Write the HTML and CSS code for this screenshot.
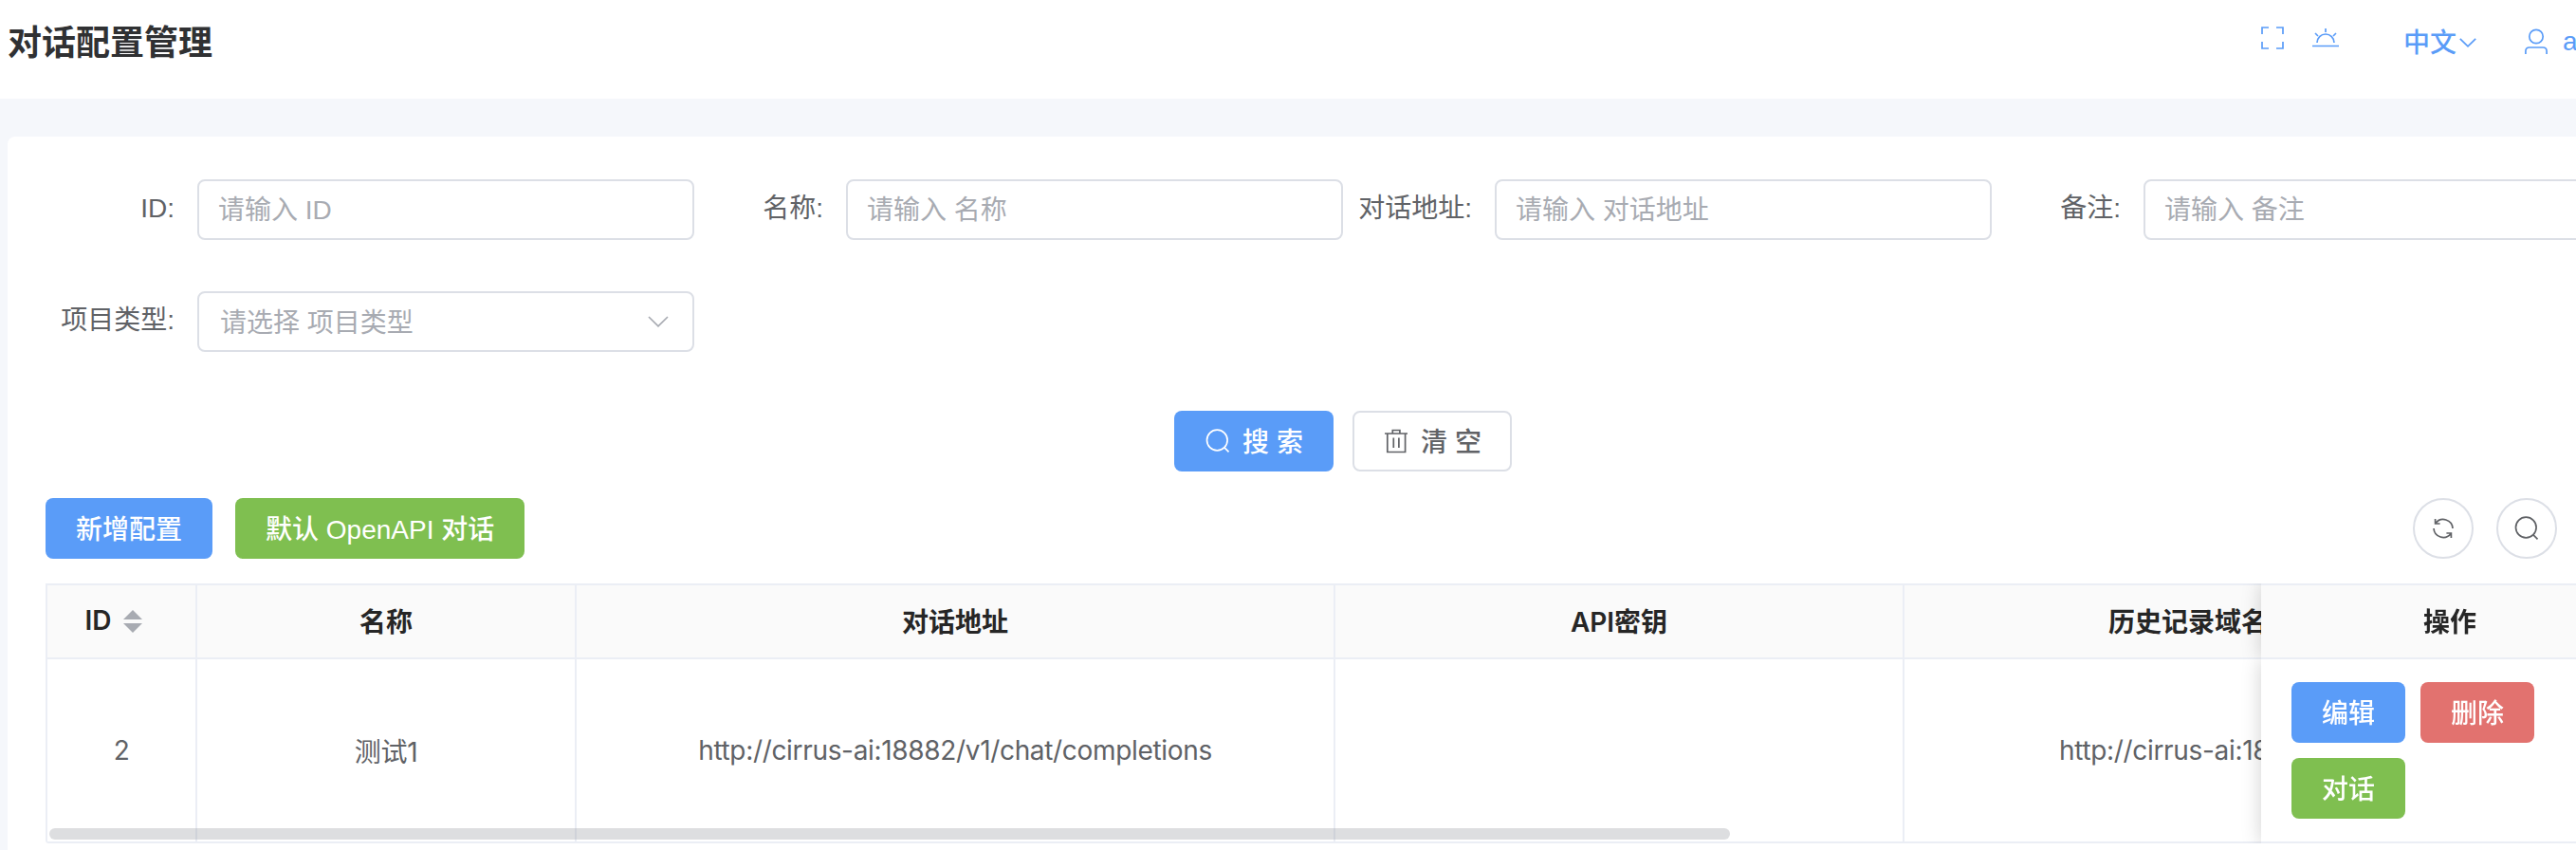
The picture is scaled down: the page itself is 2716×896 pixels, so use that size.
FILE: index.html
```html
<!DOCTYPE html>
<html lang="zh-CN">
<head>
    <meta charset="UTF-8">
    <meta name="viewport" content="width=device-width, initial-scale=1.0">
    <title>对话配置管理</title>
    <link rel="stylesheet" href="styles.css">
</head>
<body>
    <header class="header">
        <h1 class="title">对话配置管理</h1>
        <div class="tools">
            <svg class="icon full" viewBox="0 0 24 24"><path d="M1 8V1h7M16 1h7v7M23 16v7h-7M8 23H1v-7"/></svg>
            <svg class="icon sun" viewBox="0 0 28 22"><path d="M0 19.5h28M5 16a9 9 0 0 1 18 0M14 1v4M3 6l3 3M25 6l-3 3"/></svg>
            <div class="lang">
                <span>中文</span>
                <svg class="icon arrow" viewBox="0 0 18 10"><path d="M.8.8 9 8.8 17.2.8"/></svg>
            </div>
            <div class="user">
                <svg class="icon" viewBox="0 0 24 28"><circle cx="12" cy="8.5" r="7.2"/><path d="M.9 27v-3q0-4 4-4h14.200q4 0 4 4v3"/></svg>
                <span>a</span>
            </div>
        </div>
    </header>
    <div class="card">
        <form class="search-form">
            <div class="item">
                <label>ID:</label>
                <input type="text" placeholder="请输入 ID">
            </div>
            <div class="item">
                <label>名称:</label>
                <input type="text" placeholder="请输入 名称">
            </div>
            <div class="item">
                <label>对话地址:</label>
                <input type="text" placeholder="请输入 对话地址">
            </div>
            <div class="item">
                <label>备注:</label>
                <input type="text" placeholder="请输入 备注">
            </div>
            <div class="item">
                <label>项目类型:</label>
                <div class="select">
                    <span>请选择 项目类型</span>
                    <svg class="icon" viewBox="0 0 22 12"><path d="M1 1l10 9.800L21 1"/></svg>
                </div>
            </div>
        </form>
        <div class="form-btns">
            <button class="btn blue">
                <svg class="icon" viewBox="0 0 28 28"><circle cx="13.300" cy="13" r="10.800"/><path d="M20.800 20.600l4.700 4.700"/></svg>
                <span>搜 索</span>
            </button>
            <button class="btn plain">
                <svg class="icon" viewBox="0 0 28 28"><path d="M2 6h24M4.800 6v19.500h18.800V6M10.300 6V2.500h7.600V6M11.300 10.500v10.500M16.900 10.500v10.500"/></svg>
                <span>清 空</span>
            </button>
        </div>
        <div class="toolbar">
            <button class="btn blue"><span>新增配置</span></button>
            <button class="btn green"><span>默认 OpenAPI 对话</span></button>
            <div class="right">
                <button class="circle"><svg class="icon" viewBox="0 0 28 28"><path d="M5.600 4v5h5M6 8.600A10 10 0 0 1 24 14M22.400 24v-5h-5M22 19.400A10 10 0 0 1 4 14"/></svg></button>
                <button class="circle"><svg class="icon" viewBox="0 0 28 28"><circle cx="13.300" cy="13" r="10.800"/><path d="M20.800 20.600l4.700 4.700"/></svg></button>
            </div>
        </div>
        <div class="table-box">
            <table>
                <colgroup>
                    <col class="w160"><col class="w400"><col class="w800"><col class="w600"><col class="w600"><col class="rest"><col class="w400">
                </colgroup>
                <thead>
                    <tr>
                        <th><div class="sort"><span>ID</span><i class="caret"></i></div></th>
                        <th>名称</th>
                        <th>对话地址</th>
                        <th>API密钥</th>
                        <th>历史记录域名</th>
                        <th></th>
                        <th class="fixed">操作</th>
                    </tr>
                </thead>
                <tbody>
                    <tr>
                        <td>2</td>
                        <td>测试1</td>
                        <td>http://cirrus-ai:18882/v1/chat/completions</td>
                        <td></td>
                        <td>http://cirrus-ai:18882</td>
                        <td></td>
                        <td class="fixed">
                            <div class="actions">
                                <button class="btn blue"><span>编辑</span></button>
                                <button class="btn red"><span>删除</span></button>
                                <button class="btn green"><span>对话</span></button>
                            </div>
                        </td>
                    </tr>
                </tbody>
            </table>
            <div class="scrollbar"></div>
        </div>
    </div>
</body>
</html>
```

FILE: styles.css
```css
*{
    padding: 0;
    margin: 0;
    box-sizing: border-box;
}
body{
    background: #f5f7fb;
    font-family: 'Liberation Sans', 'Noto Sans CJK SC', sans-serif;
    font-size: 28px;
    color: #606266;
    height: 896px;
    overflow: hidden;
}
button, input{
    font: inherit;
}
.icon{
    fill: none;
    stroke: currentColor;
    stroke-width: 1.7;
    flex: none;
    overflow: visible;
}
/* header */
.header{
    width: 2824px;
    height: 104px;
    background: #fff;
    display: flex;
    align-items: flex-start;
    padding-left: 8px;
}
.title{
    font-size: 36px;
    line-height: 52px;
    margin-top: 20px;
    color: #303133;
    font-weight: 700;
}
.tools{
    margin-left: auto;
    width: 440px;
    height: 88px;
    display: flex;
    align-items: center;
    color: #5a9cf8;
}
.full{
    width: 24px;
    height: 24px;
    margin-bottom: 8px;
}
.sun{
    width: 28px;
    height: 22px;
    margin: 0 68px 8px 30px;
}
.lang{
    display: flex;
    align-items: center;
    font-weight: 500;
}
.lang span{
    margin-top: -3px;
}
.arrow{
    width: 18px;
    height: 10px;
    margin: 1px 51px 0 3px;
}
.user{
    display: flex;
    align-items: center;
}
.user .icon{
    width: 24px;
    height: 28px;
    margin-right: 16px;
}
/* search form */
.card{
    width: 2816px;
    height: 780px;
    margin: 40px 0 0 8px;
    padding: 45px 40px 0;
    background: #fff;
    border-radius: 8px;
}
.search-form{
    display: grid;
    grid-template-columns: repeat(4, 684px);
    row-gap: 54px;
}
.item{
    display: flex;
    height: 64px;
}
.item label{
    width: 160px;
    padding-right: 24px;
    line-height: 61px;
    text-align: right;
}
.item input, .select{
    width: 524px;
    height: 64px;
    border: 2px solid #dcdfe6;
    border-radius: 8px;
    background: #fff;
    padding: 1px 20px 0;
    outline: 0;
}
.item input::placeholder{
    color: #a8abb2;
}
.select{
    display: flex;
    align-items: center;
    justify-content: space-between;
    color: #a8abb2;
    padding: 0 25px 0 22px;
}
.select span{
    margin-top: -2px;
}
.select .icon{
    width: 22px;
    height: 12px;
}
.btn{
    height: 64px;
    padding: 0 30px;
    border: 2px solid transparent;
    border-radius: 8px;
    color: #fff;
    font-weight: 500;
    white-space: nowrap;
    display: flex;
    align-items: center;
    justify-content: center;
}
.btn span{
    margin-top: -3px;
}
.btn .icon, .circle .icon{
    width: 28px;
    height: 28px;
}
.btn .icon{
    margin-right: 12px;
}
.blue{
    background: #5a9cf8;
}
.green{
    background: #7fbf50;
}
.red{
    background: #e2726f;
}
.plain{
    background: #fff;
    border-color: #dcdfe6;
    color: #606266;
}
.form-btns{
    display: flex;
    justify-content: center;
    gap: 20px;
    margin-top: 62px;
}
.form-btns .btn{
    width: 168px;
}
/* toolbar */
.toolbar{
    display: flex;
    gap: 24px;
    margin-top: 28px;
}
.toolbar .right{
    display: flex;
    gap: 24px;
    margin-left: auto;
    margin-right: 88px;
}
.circle{
    width: 64px;
    height: 64px;
    border: 2px solid #dcdfe6;
    border-radius: 50%;
    background: #fff;
    color: #606266;
    display: flex;
    align-items: center;
    justify-content: center;
}
/* table */
.table-box{
    position: relative;
    width: 2736px;
    height: 274px;
    margin-top: 26px;
    overflow: hidden;
    border-bottom-left-radius: 4px;
}
table{
    width: 4216px;
    table-layout: fixed;
    border-collapse: separate;
    border-spacing: 0;
    font-family: Inter, 'Noto Sans CJK SC', sans-serif;
    text-align: center;
}
.w160{
    width: 160px;
}
.w400{
    width: 400px;
}
.w600{
    width: 600px;
}
.w800{
    width: 800px;
}
.rest{
    width: 1256px;
}
th, td{
    border-right: 2px solid #ebeef5;
    border-bottom: 2px solid #ebeef5;
}
th:first-child, td:first-child{
    border-left: 2px solid #ebeef5;
}
th{
    height: 80px;
    padding-bottom: 3px;
    border-top: 2px solid #ebeef5;
    background: #fafafa;
    color: #262626;
    font-weight: 600;
}
td{
    height: 194px;
    background: #fff;
    letter-spacing: -0.33px;
}
.sort{
    display: flex;
    align-items: center;
    justify-content: center;
    gap: 13px;
    padding-right: 16px;
}
.caret{
    padding-top: 2px;
}
.caret::before, .caret::after{
    content: "";
    display: block;
    border: 10px solid transparent;
    border-top-width: 0;
    border-bottom-color: #a8abb2;
}
.caret::after{
    margin-top: 4px;
    border-width: 10px 10px 0;
    border-color: #a8abb2 transparent transparent;
}
.fixed{
    position: sticky;
    right: 0;
    box-shadow: 0 0 20px rgba(0, 0, 0, 0.18);
    clip-path: inset(0 0 0 -24px);
}
.actions{
    display: flex;
    flex-wrap: wrap;
    gap: 16px;
    padding: 0 32px;
}
.actions .btn{
    width: 120px;
    letter-spacing: 0;
}
.scrollbar{
    position: absolute;
    left: 4px;
    bottom: 4px;
    width: 1772px;
    height: 12px;
    border-radius: 6px;
    background: rgba(144, 147, 153, 0.3);
}
```
